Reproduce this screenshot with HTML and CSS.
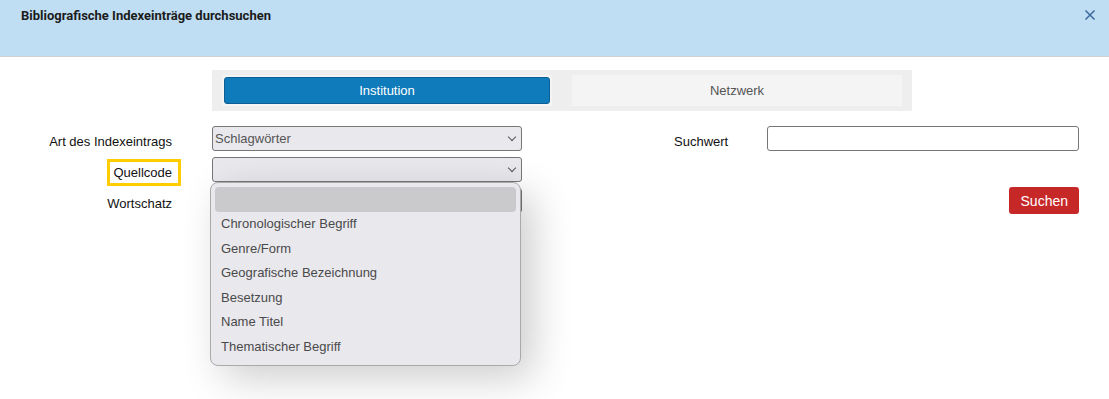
FILE: index.html
```html
<!DOCTYPE html>
<html lang="de">
<head>
    <meta charset="UTF-8">
    <meta name="viewport" content="width=device-width, initial-scale=1.0">
    <title>Bibliografische Indexeinträge durchsuchen</title>
    <link rel="stylesheet" href="styles.css">
</head>
<body>
    <div class="dialog">
        <!-- Header -->
        <div class="dialog-header">
            <h1>Bibliografische Indexeinträge durchsuchen</h1>
            <button class="close-btn" aria-label="Schließen">
                <svg viewBox="0 0 12 12">
                    <path d="M1.5 1.5L10.5 10.5M10.5 1.5L1.5 10.5"/>
                </svg>
            </button>
        </div>

        <!-- Scope tabs -->
        <div class="scope-tabs">
            <div class="tab-cell"><button class="tab active">Institution</button></div>
            <div class="tab-cell"><button class="tab">Netzwerk</button></div>
        </div>

        <!-- Search form -->
        <div class="search-form">
            <label class="field-label">Art des Indexeintrags</label>
            <div class="select-box"><span>Schlagwörter</span><i class="chevron"></i></div>
            <div></div>
            <label class="field-label left">Suchwert</label>
            <input class="text-input" type="text">

            <label class="field-label"><span class="highlight">Quellcode</span></label>
            <div class="select-wrap">
                <div class="select-box"><span></span><i class="chevron"></i></div>
                <ul class="dropdown">
                    <li class="selected">&nbsp;</li>
                    <li>Chronologischer Begriff</li>
                    <li>Genre/Form</li>
                    <li>Geografische Bezeichnung</li>
                    <li>Besetzung</li>
                    <li>Name Titel</li>
                    <li>Thematischer Begriff</li>
                </ul>
            </div>
            <div></div>
            <div></div>
            <div></div>

            <label class="field-label">Wortschatz</label>
            <div class="select-box"><span></span><i class="chevron"></i></div>
            <div></div>
            <div></div>
            <div class="actions"><button class="btn-search">Suchen</button></div>
        </div>
    </div>
</body>
</html>
```

FILE: styles.css
```css
* {
    margin: 0;
    padding: 0;
    box-sizing: border-box;
}

html,
body {
    min-height: 100vh;
}

body {
    font-family: 'Liberation Sans', Arial, sans-serif;
    font-size: 13px;
    color: #111;
    background: #fff;
}

.dialog {
    min-height: 100vh;
}

.dialog-header {
    height: 57px;
    background: #bfdef4;
    border-bottom: 1px solid #d0d0d0;
    display: flex;
    justify-content: space-between;
    align-items: flex-start;
    padding: 8px 13px 0 21px;
}

.dialog-header h1 {
    font-family: Roboto, 'Liberation Sans', sans-serif;
    font-size: 13px;
    font-weight: 700;
    color: #1b1b1b;
    line-height: 16px;
}

.close-btn {
    border: 0;
    background: none;
    width: 12px;
    height: 12px;
    margin-top: 1px;
    cursor: pointer;
}

.close-btn svg {
    width: 12px;
    height: 12px;
    display: block;
    stroke: #3d6a9e;
    stroke-width: 1.5;
    fill: none;
}

.scope-tabs {
    width: 700px;
    margin: 13px 0 0 212px;
    padding: 5px 10px;
    background: #eeeeee;
    display: flex;
    gap: 20px;
}

.tab-cell {
    flex: 1;
    background: #f4f4f4;
    padding: 2px;
}

.tab {
    width: 100%;
    height: 27px;
    border: 1px solid #f4f4f4;
    border-radius: 3px;
    background: #f4f4f4;
    color: #555;
    font-family: 'Liberation Sans', Arial, sans-serif;
    font-size: 13px;
}

.tab.active {
    background: #0f7bbb;
    border-color: #0c5f96;
    color: #fff;
}

.search-form {
    display: grid;
    grid-template-columns: 212px 310px 152px 93px 312px;
    row-gap: 6px;
    grid-auto-rows: 25px;
    margin-top: 15px;
}

.field-label {
    text-align: right;
    line-height: 15px;
    padding: 8px 40px 0 0;
    color: #111;
}

.field-label.left {
    text-align: left;
    padding-right: 0;
}

.select-wrap {
    position: relative;
    width: 310px;
}

.select-box {
    width: 310px;
    height: 25px;
    background: #e9e8ed;
    border: 1px solid #767676;
    border-radius: 3px;
    display: flex;
    align-items: center;
    justify-content: space-between;
    padding: 0 6px 0 2px;
    color: #555;
}

.chevron {
    width: 6px;
    height: 6px;
    border-right: 1.3px solid #555;
    border-bottom: 1.3px solid #555;
    transform: rotate(45deg);
    margin-top: -3px;
}

.highlight {
    outline: 3px solid #ffcc00;
    outline-offset: 3px;
    padding-right: 3px;
    margin-right: -3px;
}

.text-input {
    width: 312px;
    height: 25px;
    border: 1px solid #767676;
    border-radius: 3px;
    background: #fff;
}

.actions {
    display: flex;
    justify-content: flex-end;
    align-items: flex-start;
    margin-top: -1px;
}

.btn-search {
    height: 27px;
    padding: 0 11px 0 12px;
    border: 0;
    border-radius: 3px;
    background: #c62828;
    color: #fff;
    font-family: 'Liberation Sans', Arial, sans-serif;
    font-size: 14px;
}

.dropdown {
    position: absolute;
    top: 100%;
    left: -2px;
    width: 311px;
    list-style: none;
    background: #e9e8ed;
    border: 1px solid #a9a9a9;
    border-radius: 8px;
    padding: 4px 4px 5px;
    box-shadow: 12px 12px 40px rgba(0, 0, 0, 0.2);
    z-index: 10;
}

.dropdown li {
    height: 24.6px;
    line-height: 24.6px;
    padding-left: 6px;
    color: #4a4a4a;
    border-radius: 4px;
}

.dropdown li.selected {
    background: #cacacc;
    height: 25px;
}
```
